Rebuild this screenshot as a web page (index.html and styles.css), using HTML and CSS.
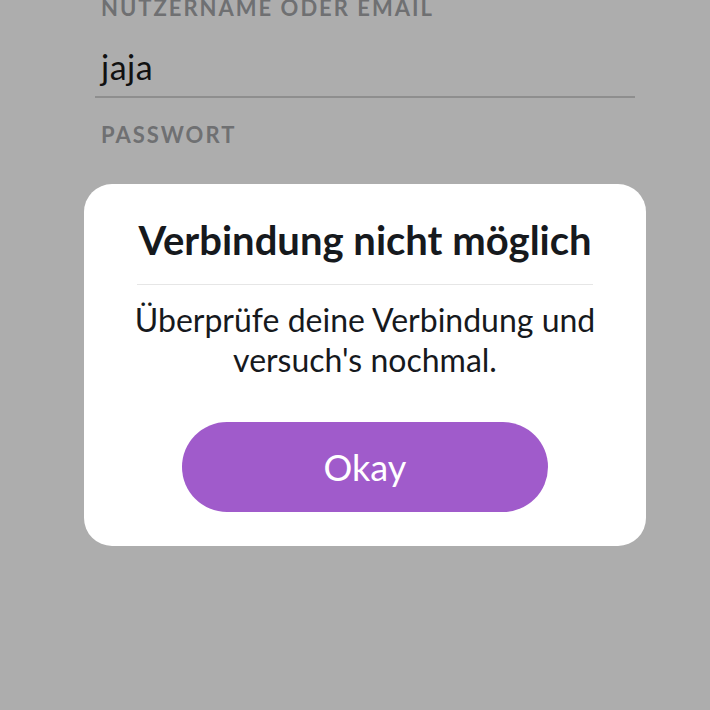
FILE: index.html
```html
<!DOCTYPE html>
<html lang="de">
<head>
  <meta charset="UTF-8">
  <meta name="viewport" content="width=device-width, initial-scale=1.0">
  <title>Anmelden</title>
  <link rel="stylesheet" href="styles.css">
</head>
<body>
  <!-- Login-Formular im Hintergrund -->
  <div class="login-form">
    <div class="field-label first">NUTZERNAME ODER EMAIL</div>
    <div class="field-input">jaja</div>
    <div class="field-label">PASSWORT</div>
  </div>

  <!-- Fehlerdialog -->
  <div class="overlay">
    <div class="dialog">
      <div class="dialog-title">Verbindung nicht möglich</div>
      <div class="dialog-divider"></div>
      <div class="dialog-text">Überprüfe deine Verbindung und versuch's nochmal.</div>
      <button class="dialog-button">Okay</button>
    </div>
  </div>
</body>
</html>
```

FILE: styles.css
```css
body {
  margin: 0;
  padding: 0;
  height: 710px;
  overflow: hidden;
  background-color: #adadad;
  font-family: Lato, "Open Sans", sans-serif;
}
/* Formular */
.login-form {
  padding: 0 75px 0 95px;
}
.field-label {
  padding-left: 6px;
  font-size: 22px;
  line-height: 26px;
  font-weight: 700;
  letter-spacing: 2px;
  color: #6f7072;
  margin-top: 24px;
}
.field-label.first {
  margin-top: -5px;
}
.field-input {
  padding-left: 6px;
  margin-top: 28px;
  font-size: 34px;
  line-height: 36px;
  letter-spacing: 0.5px;
  color: #111;
  padding-bottom: 11px;
  border-bottom: 2px solid #8e8e8e;
}
/* Dialog */
.overlay {
  position: absolute;
  top: 0;
  left: 0;
  right: 0;
  bottom: 0;
  padding: 184px 0 0 84px;
}
.dialog {
  width: 562px;
  box-sizing: border-box;
  background-color: #fff;
  border-radius: 28px;
  padding: 32px 50px 34px 50px;
  display: flex;
  flex-direction: column;
  align-items: center;
  text-align: center;
}
.dialog-title {
  font-size: 40px;
  line-height: 48px;
  font-weight: 700;
  color: #16191d;
}
.dialog-divider {
  align-self: stretch;
  height: 1px;
  background-color: #e6e6e6;
  margin: 20px 3px 0 3px;
}
.dialog-text {
  margin-top: 15px;
  font-size: 32px;
  line-height: 40px;
  color: #16191d;
}
.dialog-button {
  margin-top: 42px;
  width: 366px;
  height: 90px;
  border: none;
  border-radius: 45px;
  background-color: #a05bcb;
  color: #fff;
  font-family: inherit;
  font-size: 36px;
  cursor: pointer;
}
```
